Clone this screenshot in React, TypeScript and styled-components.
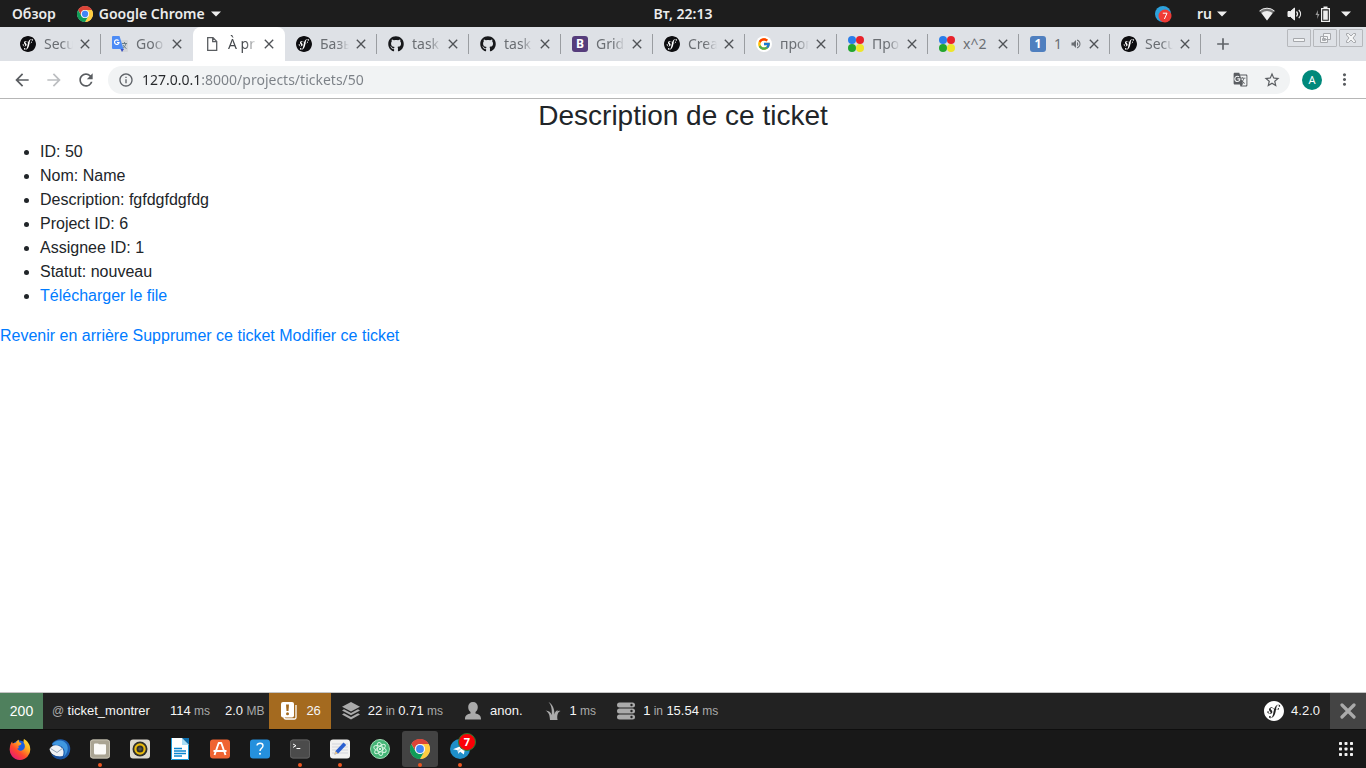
import React from "react";
import styled, { createGlobalStyle } from "styled-components";
import { SiSymfony } from "react-icons/si";
import { FaGithub } from "react-icons/fa";
import { FcGoogle } from "react-icons/fc";
import { MdArrowBack, MdArrowForward, MdRefresh, MdInfoOutline, MdStarBorder, MdMoreVert, MdClose, MdAdd, MdGTranslate, MdVolumeUp } from "react-icons/md";

const shellFont = `"Noto Sans", "Open Sans", sans-serif`;
const pageFont = `"Liberation Sans", Arial, sans-serif`;

const GlobalStyle = createGlobalStyle`
  *, *::before, *::after { box-sizing: border-box; }
  body { margin: 0; background: #fff; }
  button { border: 0; padding: 0; background: none; color: inherit; font: inherit; cursor: pointer; }
  svg { display: block; flex: none; }
`;

const Desktop = styled.div`
  min-height: 100vh;
  display: flex;
  flex-direction: column;
  font-family: ${shellFont};
`;

/* Desktop top bar */
const TopBar = styled.header`
  height: 27px;
  display: grid;
  grid-template-columns: 1fr auto 1fr;
  align-items: center;
  background: #1d1d1d;
  color: #ececec;
  font-size: 14px;
  font-weight: 600;
  line-height: 20px;
`;

const TopMenus = styled.div`
  display: flex;
  align-items: center;
  gap: 21px;
  padding-left: 12px;
`;

const MenuButton = styled.button`
  display: flex;
  align-items: center;
  gap: 6px;
`;

const Tray = styled.div`
  display: flex;
  align-items: center;
  justify-content: flex-end;
  padding-right: 15px;
`;

const TrayButton = styled.button<{ $gap: number }>`
  display: flex;
  align-items: center;
  gap: 5px;
  margin-left: ${(p) => p.$gap}px;
`;

/* Browser tabs */
const TabStrip = styled.div`
  height: 34px;
  display: flex;
  padding-left: 9px;
  background: #dee1e6;
  color: #5f6368;
`;

const Tabs = styled.div`
  flex: 0 1 1192px;
  min-width: 0;
  display: grid;
  grid-template-columns: repeat(9, 92fr) repeat(4, 91fr);
`;

const Tab = styled.div<{ $active?: boolean; $line: boolean }>`
  position: relative;
  min-width: 0;
  display: flex;
  align-items: center;
  padding: 0 8px 0 11px;
  color: ${(p) => (p.$active ? "#45494d" : "#6a6e73")};
  background: ${(p) => (p.$active ? "#fff" : "transparent")};
  border-radius: 8px 8px 0 0;
  &::after {
    content: "";
    display: ${(p) => (p.$line ? "block" : "none")};
    position: absolute;
    right: 0;
    top: 7px;
    width: 1px;
    height: 20px;
    background: #9a9da1;
  }
`;

const TabSelect = styled.button`
  flex: 1;
  min-width: 0;
  display: flex;
  align-items: center;
  gap: 8px;
  text-align: left;
`;

const TabTitle = styled.span<{ $fade: boolean }>`
  flex: 1;
  min-width: 0;
  overflow: hidden;
  white-space: nowrap;
  font-size: 14px;
  line-height: 20px;
  mask-image: ${(p) => (p.$fade ? "linear-gradient(to left, transparent, #000 12px)" : "none")};
`;

const TabClose = styled.button`
  width: 16px;
  height: 16px;
  margin-left: 4px;
  color: #505357;
`;

const NewTab = styled.button`
  width: 44px;
  display: grid;
  place-items: center;
`;

const WindowButtons = styled.div`
  display: flex;
  gap: 2px;
  margin-left: auto;
  padding: 2px 3px 0 0;
`;

const WindowButton = styled.button`
  width: 24px;
  height: 18px;
  display: grid;
  place-items: center;
  border: 1px solid #b6b8bc;
  border-radius: 1px;
`;

const SfDisc = styled.span<{ $size: number; $invert?: boolean }>`
  flex: none;
  width: ${(p) => p.$size}px;
  height: ${(p) => p.$size}px;
  display: grid;
  place-items: center;
  border-radius: 50%;
  background: ${(p) => (p.$invert ? "#222" : "#fff")};
  color: ${(p) => (p.$invert ? "#fff" : "#0d0d10")};
`;

const Badge = styled.span<{ $bg: string; $size: number; $round?: boolean }>`
  flex: none;
  width: ${(p) => p.$size}px;
  height: ${(p) => p.$size}px;
  display: grid;
  place-items: center;
  border-radius: ${(p) => (p.$round ? "50%" : "3px")};
  background: ${(p) => p.$bg};
  color: #fff;
  font-size: 12px;
  font-weight: 700;
  line-height: 16px;
`;

/* Address bar row */
const AddressRow = styled.div`
  height: 38px;
  display: flex;
  align-items: center;
  padding: 0 12px;
  background: #fff;
  border-bottom: 1px solid #b6b6b6;
  color: #5f6368;
`;

const NavButtons = styled.div`
  display: flex;
  gap: 12px;
  margin-right: 12px;
`;

const NavButton = styled.button<{ $dim?: boolean }>`
  width: 20px;
  height: 20px;
  display: grid;
  place-items: center;
  color: ${(p) => (p.$dim ? "#bcbec1" : "#5a5d61")};
`;

const Omnibox = styled.div`
  flex: 1;
  height: 28px;
  display: flex;
  align-items: center;
  padding: 0 8px 0 10px;
  border-radius: 14px;
  background: #f1f3f4;
`;

const UrlInput = styled.input`
  flex: 1;
  min-width: 0;
  margin-left: 8px;
  padding: 0;
  border: 0;
  outline: 0;
  font-family: ${shellFont};
  font-size: 14px;
  line-height: 20px;
  color: transparent;
  background: linear-gradient(to right, #26282b 59px, #7b8086 59px);
  background-clip: text;
`;

const OmniActions = styled.div`
  display: flex;
  align-items: center;
  gap: 12px;
`;

const Avatar = styled.button`
  width: 20px;
  height: 20px;
  margin: 0 12px;
  border-radius: 50%;
  background: #00897b;
  color: #fff;
  font-size: 11px;
  line-height: 20px;
`;

/* Ticket page */
const Page = styled.main`
  flex: 1;
  font-family: ${pageFont};
  font-size: 16px;
  line-height: 24px;
  color: #212529;
`;

const Heading = styled.h3`
  margin: 0 0 8px;
  font-size: 28px;
  font-weight: 500;
  line-height: 33px;
  text-align: center;
`;

const Details = styled.ul`
  margin: 0 0 16px;
  padding-left: 40px;
`;

const Link = styled.a`
  color: #007bff;
  text-decoration: none;
`;

/* Symfony debug toolbar */
const DebugBar = styled.footer`
  height: 37px;
  display: flex;
  border-top: 1px solid #c4c4c4;
  background: #222;
  color: #f5f5f5;
  font-family: ${pageFont};
  font-size: 13px;
  line-height: 36px;
`;

const DebugBlock = styled.a<{ $bg?: string; $tight?: boolean }>`
  display: flex;
  gap: 7px;
  align-items: center;
  padding: 0 ${(p) => (p.$tight ? 5 : 10)}px 0 10px;
  background: ${(p) => p.$bg ?? "transparent"};
  color: inherit;
  text-decoration: none;
  white-space: pre;
`;

const Status = styled.a`
  width: 43px;
  background: #4f805d;
  color: #fff;
  font-size: 14px;
  text-align: center;
  text-decoration: none;
`;

const Route = styled(DebugBlock)`
  padding-left: 9px;
`;

const Unit = styled.span`
  color: #aaa;
  font-size: 12px;
`;

const DebugEnd = styled.div`
  display: flex;
  margin-left: auto;
`;

const DebugClose = styled.button`
  width: 36px;
  display: grid;
  place-items: center;
  background: #444;
`;

/* Dock */
const DockBar = styled.nav`
  height: 39px;
  display: flex;
  align-items: center;
  padding: 0 10px 0 2px;
  background: #181818;
  border-top: 1px solid #0e0e0e;
`;

const DockList = styled.div`
  display: flex;
  gap: 4px;
`;

const DockItem = styled.button<{ $active?: boolean; $running?: boolean }>`
  position: relative;
  width: 36px;
  height: 36px;
  display: grid;
  place-items: center;
  border-radius: 3px;
  background: ${(p) => (p.$active ? "#434343" : "transparent")};
  &::after {
    content: "";
    display: ${(p) => (p.$running ? "block" : "none")};
    position: absolute;
    left: 16px;
    bottom: 0;
    width: 4px;
    height: 4px;
    border-radius: 2px;
    background: #e95420;
  }
`;

const DockCount = styled.span`
  position: absolute;
  right: 2px;
  top: 2px;
  width: 18px;
  height: 18px;
  border: 1px solid #2c7a2c;
  border-radius: 50%;
  background: #fb0007;
  color: #fff;
  font-size: 11px;
  font-weight: 700;
  line-height: 16px;
  text-align: center;
`;

const AppGrid = styled.button`
  margin-left: auto;
  width: 20px;
  height: 20px;
  display: grid;
  place-items: center;
`;

const ChromeLogo = ({ size }: { size: number }) => {
  const blade = "M2.47 6.5A11 11 0 0 1 21.53 6.5H12A5.5 5.5 0 0 0 7.24 14.75Z";
  return (
    <svg width={size} height={size} viewBox="1 1 22 22">
      <circle cx="12" cy="12" r="10.8" fill="#fff" />
      <path d={blade} fill="#db4437" />
      <path d={blade} fill="#ffcd40" transform="rotate(120 12 12)" />
      <path d={blade} fill="#0f9d58" transform="rotate(240 12 12)" />
      <circle cx="12" cy="12" r="5.5" fill="#f1f1f1" />
      <circle cx="12" cy="12" r="4.3" fill="#4285f4" />
    </svg>
  );
};

const Caret = () => (
  <svg width="10" height="6" viewBox="0 0 10 6"><path d="M0 0.5H10L5 5.5Z" fill="#eee" /></svg>
);

const SfIcon = ({ size, invert }: { size: number; invert?: boolean }) => (
  <SfDisc $size={size} $invert={invert}><SiSymfony size={size} /></SfDisc>
);

const TranslateIcon = () => (
  <svg width="16" height="16" viewBox="0 0 16 16">
    <path d="M6 4h9a1 1 0 0 1 1 1v10a1 1 0 0 1-1 1H9.5Z" fill="#d3d5d8" />
    <path d="M8.5 13L12 13l-2 3Z" fill="#3a4fc0" />
    <path d="M10 7.500h5M12.500 6v1.500M14 7.500c-.6 2.500-2 4-3.500 5M11 9c.7 1.500 2 2.800 3.500 3.500" stroke="#6b7f89" fill="none" />
    <path d="M1 0h6.500l4 13H1a1 1 0 0 1-1-1V1a1 1 0 0 1 1-1Z" fill="#4c8bf5" />
    <path d="M6.600 4.600A2.300 2.300 0 1 0 7.100 6.500H5" stroke="#fff" fill="none" strokeWidth="1.200" />
  </svg>
);

const FileIcon = () => (
  <svg width="16" height="16" viewBox="0 0 16 16" fill="none" stroke="#5a5d61" strokeWidth="1.300">
    <path d="M3.700 1.700H9l3.700 3.700v9H3.700ZM8.700 1.700v4h4" />
  </svg>
);

const BootstrapIcon = () => (
  <Badge $size={16} $bg="#563d7c">B</Badge>
);

const DotsIcon = () => (
  <svg width="16" height="16" viewBox="0 0 16 16">
    <circle cx="4" cy="4" r="4" fill="#2b7de9" />
    <circle cx="12" cy="4" r="4" fill="#e8212b" />
    <circle cx="4" cy="12" r="4" fill="#22a62e" />
    <circle cx="12" cy="12" r="4" fill="#eee52a" />
  </svg>
);

const GoogleIcon = () => (
  <Badge $size={16} $bg="#fff" $round><FcGoogle size={14} /></Badge>
);

const OneIcon = () => <Badge $size={16} $bg="#4f7fbf">1</Badge>;

const tabs: { title: string; icon: React.ReactNode; active?: boolean; audio?: boolean; whole?: boolean }[] = [
  { title: "Secu", icon: <SfIcon size={16} /> },
  { title: "Goo", icon: <TranslateIcon /> },
  { title: "À pr", icon: <FileIcon />, active: true },
  { title: "Базы", icon: <SfIcon size={16} /> },
  { title: "task", icon: <FaGithub size={16} color="#17181b" /> },
  { title: "task", icon: <FaGithub size={16} color="#17181b" /> },
  { title: "Grid", icon: <BootstrapIcon /> },
  { title: "Crea", icon: <SfIcon size={16} /> },
  { title: "прог", icon: <GoogleIcon /> },
  { title: "Про", icon: <DotsIcon /> },
  { title: "x^2", icon: <DotsIcon />, whole: true },
  { title: "1", icon: <OneIcon />, audio: true, whole: true },
  { title: "Secu", icon: <SfIcon size={16} /> },
];

const FirefoxIcon = () => (
  <svg width="22" height="22" viewBox="0 0 22 22">
    <defs>
      <linearGradient id="ff" x1="1" y1="0" x2="0.200" y2="1">
        <stop offset="0" stopColor="#fff14a" /><stop offset="0.350" stopColor="#ffb020" />
        <stop offset="0.650" stopColor="#ff4a2c" /><stop offset="1" stopColor="#e3157c" />
      </linearGradient>
    </defs>
    <circle cx="10.500" cy="10" r="7.500" fill="#1a5fe0" />
    <path d="M15 1c3 1.500 6 5 6.200 9.500A10.300 10.300 0 1 1 .8 10C1 7 1.800 5 3.200 3.500c0 1 .2 1.500.6 2 1-.8 2-1 3.200-.8C7.500 3 8.700 2 10 1.800 9.500 3 10 4.200 11.500 4.800c1 .4 1.200 1.300.2 2-1 .6-2 .7-2.400 1.700 1 1 .2 2-1 2.100.5 2.500 4.200 2.600 6.200.8 2-2 1.600-4.600.3-6.300C14.500 4 14.300 2.500 15 1Z" fill="url(#ff)" />
  </svg>
);

const ThunderbirdIcon = () => (
  <svg width="22" height="22" viewBox="0 0 22 22">
    <path d="M3 5.500C6 1 14-.5 18.500 4c4.500 4.500 3.500 13-3 16.500-3 1.300-6 1-8-1Z" fill="#1c5cae" />
    <path d="M3 6.500C6.500 1.500 14 1 17.500 6c2.500 4 1 9.500-2.500 12.500 1.500-4 1-8-3-10.500C9 6.500 5.500 7.500 3 6.500Z" fill="#3f97e0" />
    <path d="M.5 11C2.500 7.500 7 6 11 8.500c3.500 2.300 4.500 6 2.500 10C8 19.500 1.500 17 .5 11Z" fill="#eef1f5" />
    <path d="M1.500 10.500l6.500 4 6-4.500" stroke="#93a2b4" fill="none" />
    <path d="M2 15.500c2 4.500 6.500 6.500 11.500 5.500l1-3c-4 1-9 .5-12.500-2.500Z" fill="#174f9b" />
  </svg>
);

const FilesIcon = () => (
  <svg width="22" height="22" viewBox="0 0 22 22">
    <rect x="1" y="1.500" width="20" height="19" rx="3" fill="#aaa493" />
    <rect x="1.500" y="2" width="19" height="18" rx="2.500" fill="none" stroke="#c3beaf" />
    <path d="M5 6.500a1 1 0 0 1 1-1h3l1 .8h6a1 1 0 0 1 1 1V15a1.500 1.500 0 0 1-1.500 1.500h-9A1.500 1.500 0 0 1 5 15Z" fill="#fbfaf8" />
  </svg>
);

const RhythmIcon = () => (
  <svg width="22" height="22" viewBox="0 0 22 22">
    <rect x="1" y="1.500" width="20" height="19" rx="3" fill="#ddd9cf" />
    <circle cx="11" cy="11" r="7.500" fill="#2f2f2b" />
    <circle cx="11" cy="11" r="4.600" fill="none" stroke="#e8b90c" strokeWidth="2.200" />
    <circle cx="11" cy="11" r="1.800" fill="#55534c" />
  </svg>
);

const WriterIcon = () => (
  <svg width="22" height="22" viewBox="0 0 22 22">
    <path d="M2 0h11l7 7v15H2Z" fill="#fff" />
    <path d="M13 0h7v7Z" fill="#0d6fae" />
    <path d="M13 0v7h7Z" fill="#a9def7" />
    <path d="M5 10.500h8M5 13h12M5 15.500h12M5 18h8" stroke="#0a86cf" strokeWidth="1.300" />
    <path d="M2.500 0v21.500H19.500V7" fill="none" stroke="#1a9ad8" />
  </svg>
);

const SoftwareIcon = () => (
  <svg width="22" height="22" viewBox="0 0 22 22">
    <rect x="1" y="1.500" width="20" height="19" rx="3" fill="#ef6432" />
    <path d="M5.500 17L9.700 5h2.600L16.500 17M4.500 13h13" stroke="#fff" strokeWidth="1.900" fill="none" strokeLinejoin="round" />
  </svg>
);

const HelpIcon = () => (
  <svg width="22" height="22" viewBox="0 0 22 22">
    <rect x="1" y="1.500" width="20" height="19" rx="3" fill="#2590dd" />
    <path d="M8 7.500c.5-3 6-3 6 .3 0 2.400-3 2.500-3 5.200" stroke="#fff" strokeWidth="1.400" fill="none" />
    <circle cx="11" cy="15.800" r="1" fill="#fff" />
  </svg>
);

const TerminalIcon = () => (
  <svg width="22" height="22" viewBox="0 0 22 22">
    <rect x="1" y="1.500" width="20" height="19" rx="3" fill="#4b4b4b" />
    <rect x="1.500" y="2" width="19" height="18" rx="2.500" fill="none" stroke="#5f5f5f" />
    <path d="M4 6l3 1.700L4 9.400M7.500 10.500h3.800" stroke="#fff" fill="none" />
  </svg>
);

const EditorIcon = () => (
  <svg width="22" height="22" viewBox="0 0 22 22">
    <rect x="1" y="1.500" width="20" height="19" rx="3" fill="#f2f1f0" />
    <path d="M3 6h16M3 9h16M3 12h16M3 15h16" stroke="#d3d5db" />
    <path d="M5.500 16.500l1-3.500 8-8.500 2.700 2.500-8 8.500Z" fill="#2a5fd0" />
    <path d="M5.500 16.500l1-3.500 2.700 2.500Z" fill="#e8c68e" />
  </svg>
);

const AtomIcon = () => (
  <svg width="22" height="22" viewBox="0 0 22 22" fill="none" stroke="#d5f3df">
    <circle cx="11" cy="11" r="9.500" fill="#45b577" stroke="#9fdcb3" />
    <ellipse cx="11" cy="11" rx="2.500" ry="6.500" transform="rotate(-10 11 11)" />
    <ellipse cx="11" cy="11" rx="2.500" ry="6.500" transform="rotate(50 11 11)" />
    <ellipse cx="11" cy="11" rx="2.500" ry="6.500" transform="rotate(110 11 11)" />
    <circle cx="11" cy="11" r="1" fill="#fff" stroke="none" />
  </svg>
);

const TelegramIcon = () => (
  <svg width="22" height="22" viewBox="0 0 22 22">
    <circle cx="11" cy="11" r="10" fill="#1f8fc9" />
    <path d="M4 11.200L17 6l-2.200 10.500-3.600-2.700-2 1.900-.6-3.400Z" fill="#fff" />
    <path d="M8.600 12.300L15 8l-5 5.200-.8 2.500Z" fill="#b6d7ea" />
  </svg>
);

const dock: { label: string; icon: React.ReactNode; running?: boolean; active?: boolean; count?: number }[] = [
  { label: "Firefox", icon: <FirefoxIcon /> },
  { label: "Thunderbird", icon: <ThunderbirdIcon /> },
  { label: "Files", icon: <FilesIcon />, running: true },
  { label: "Rhythmbox", icon: <RhythmIcon /> },
  { label: "Writer", icon: <WriterIcon /> },
  { label: "Software", icon: <SoftwareIcon /> },
  { label: "Help", icon: <HelpIcon /> },
  { label: "Terminal", icon: <TerminalIcon />, running: true },
  { label: "Text Editor", icon: <EditorIcon />, running: true },
  { label: "Atom", icon: <AtomIcon /> },
  { label: "Google Chrome", icon: <ChromeLogo size={20} />, running: true, active: true },
  { label: "Telegram", icon: <TelegramIcon />, running: true, count: 7 },
];

const LogsIcon = () => (
  <svg width="20" height="20" viewBox="0 0 20 20">
    <path d="M5 3.500v12.500a2 2 0 0 0 2 2h8.500a1.500 1.500 0 0 0 1.500-1.500V4" stroke="#fff" strokeWidth="1.300" fill="none" />
    <rect x="2" y="1" width="13" height="15.500" rx="2" fill="#fff" />
    <path d="M7 3.500h3L9.500 10h-2Z" fill="#a46a1f" />
    <circle cx="8.500" cy="12.700" r="1.500" fill="#a46a1f" />
  </svg>
);

const LayersIcon = () => (
  <svg width="20" height="20" viewBox="0 0 20 20" fill="#aaa">
    <path d="M10 1l9 4.700-9 4.800-9-4.800Z" />
    <path d="M3 8.300L1 9.500l9 4.800 9-4.800-2-1.200-7 3.700Z" />
    <path d="M3 12.200l-2 1.200 9 5.100 9-5.100-2-1.200-7 3.900Z" />
  </svg>
);

const UserIcon = () => (
  <svg width="20" height="20" viewBox="0 0 20 20" fill="#aaa">
    <path d="M10 1c3 0 4.800 2 4.800 5 0 2.200-.8 4-2.300 5v1.500c2.800.6 5.500 1.500 5.500 5.500v.5H2V18c0-4 2.700-4.900 5.500-5.500V11C6 10 5.200 8.200 5.200 6c0-3 1.800-5 4.800-5Z" />
  </svg>
);

const TwigIcon = () => (
  <svg width="20" height="20" viewBox="0 0 20 20" fill="#aaa">
    <path d="M7 19c-.2-4.500-1-7.500-4.500-9.500 3.500.3 5.300 1.800 6.300 4.500C9 8.500 8.500 4 5.500 1c4.500 2.500 6 7.500 6 12.500.5-2.600 1.500-4 3.800-4.700-.8.700-1.300 1.300-1.500 2 .8-.9 2.200-1.400 3.700-.8-3 1.200-3.700 5-2.900 9Z" />
  </svg>
);

const DatabaseIcon = () => (
  <svg width="20" height="20" viewBox="0 0 20 20">
    <g fill="#aaa"><rect x="1" y="1.500" width="18" height="5" rx="2.500" /><rect x="1" y="7.500" width="18" height="5" rx="2.500" /><rect x="1" y="13.500" width="18" height="5" rx="2.500" /></g>
    <g fill="#222"><circle cx="15.500" cy="4" r="1.200" /><circle cx="15.500" cy="10" r="1.200" /><circle cx="15.500" cy="16" r="1.200" /></g>
  </svg>
);

const WifiIcon = () => (
  <svg width="16" height="16" viewBox="0 0 16 16">
    <path d="M.5 5A11.500 11.500 0 0 1 15.500 5L8 14.500Z" fill="#777" />
    <path d="M.5 5A11.500 11.500 0 0 1 15.500 5" stroke="#eee" fill="none" />
    <path d="M2.500 7A8.500 8.500 0 0 1 13.500 7L8 14.500Z" fill="#eee" />
  </svg>
);

const VolumeIcon = () => (
  <svg width="16" height="16" viewBox="0 0 16 16" fill="none" stroke="#eee">
    <path d="M1 5.500h2.500L7.500 2v12L3.500 10.500H1Z" fill="#eee" />
    <path d="M9.500 5.500c1.300 1.500 1.300 3.500 0 5M11.800 3.800c2.300 2.500 2.300 6 0 8.400" strokeWidth="1.200" />
  </svg>
);

const BatteryIcon = () => (
  <svg width="16" height="16" viewBox="0 0 16 16">
    <path d="M3 4L.5 9H2.500L2 13 4.500 8H2.800Z" fill="#999" />
    <path d="M6.600 2.600h7.800v12.800H6.600Z" fill="none" stroke="#eee" strokeWidth="1.200" />
    <path d="M8.500 0.500h4V2h-4ZM8.200 4.500h4.600v9.300H8.200Z" fill="#eee" />
  </svg>
);

const TrayTelegram = () => (
  <svg width="18" height="18" viewBox="0 0 18 18">
    <circle cx="9" cy="9" r="8" fill="#2ca1dc" />
    <circle cx="11" cy="11" r="6.500" fill="#f03b36" />
    <path d="M8.800 8.200h4.200L10.400 14" stroke="#fff" fill="none" />
  </svg>
);

const windowIcons = [
  { label: "Minimize", d: "M6.500 8.500h11v3h-11Z" },
  { label: "Restore", d: "M10.500 3.500h7v6h-7ZM7.500 6.500h7v6h-7ZM9.500 8.500h3v2h-3Z" },
  { label: "Close window", d: "M7.500 3.500h2L12 6l2.500-2.500h2V5L14 8l2.500 3v1.500h-2L12 10l-2.500 2.500h-2V11L10 8 7.500 5Z" },
];

export default function App() {
  return (
    <Desktop>
      <GlobalStyle />
      <TopBar>
        <TopMenus>
          <MenuButton>Обзор</MenuButton>
          <MenuButton><ChromeLogo size={16} />Google Chrome<Caret /></MenuButton>
        </TopMenus>
        <time>Вт, 22:13</time>
        <Tray>
          <TrayButton $gap={0} aria-label="Telegram"><TrayTelegram /></TrayButton>
          <TrayButton $gap={25}>ru<Caret /></TrayButton>
          <TrayButton $gap={32} aria-label="Wi-Fi"><WifiIcon /></TrayButton>
          <TrayButton $gap={12} aria-label="Volume"><VolumeIcon /></TrayButton>
          <TrayButton $gap={12} aria-label="Battery"><BatteryIcon /></TrayButton>
          <TrayButton $gap={10} aria-label="System menu"><Caret /></TrayButton>
        </Tray>
      </TopBar>

      <TabStrip>
        <Tabs role="tablist">
          {tabs.map((tab, i) => (
            <Tab key={i} $active={tab.active} $line={!tab.active && !tabs[i + 1]?.active}>
              <TabSelect role="tab" aria-selected={!!tab.active}>
                {tab.icon}
                <TabTitle $fade={!tab.whole}>{tab.title}</TabTitle>
                {tab.audio && <MdVolumeUp size={12} />}
              </TabSelect>
              <TabClose aria-label="Close tab"><MdClose size={16} /></TabClose>
            </Tab>
          ))}
        </Tabs>
        <NewTab aria-label="New tab"><MdAdd size={20} /></NewTab>
        <WindowButtons>
          {windowIcons.map((w) => (
            <WindowButton key={w.label} aria-label={w.label}>
              <svg width="22" height="16" viewBox="1 0 22 16" fill="#f4f5f6" stroke="#a6a8ac"><path d={w.d} /></svg>
            </WindowButton>
          ))}
        </WindowButtons>
      </TabStrip>

      <AddressRow>
        <NavButtons>
          <NavButton aria-label="Back"><MdArrowBack size={20} /></NavButton>
          <NavButton aria-label="Forward" $dim><MdArrowForward size={20} /></NavButton>
          <NavButton aria-label="Reload"><MdRefresh size={20} /></NavButton>
        </NavButtons>
        <Omnibox>
          <MdInfoOutline size={16} />
          <UrlInput aria-label="Address" defaultValue="127.0.0.1:8000/projects/tickets/50" />
          <OmniActions>
            <NavButton aria-label="Translate"><MdGTranslate size={15} /></NavButton>
            <NavButton aria-label="Bookmark"><MdStarBorder size={18} /></NavButton>
          </OmniActions>
        </Omnibox>
        <Avatar aria-label="Profile">A</Avatar>
        <NavButton aria-label="Menu"><MdMoreVert size={19} /></NavButton>
      </AddressRow>

      <Page>
        <Heading>Description de ce ticket</Heading>
        <Details>
          <li>ID: 50</li>
          <li>Nom: Name</li>
          <li>Description: fgfdgfdgfdg</li>
          <li>Project ID: 6</li>
          <li>Assignee ID: 1</li>
          <li>Statut: nouveau</li>
          <li><Link href="#file">Télécharger le file</Link></li>
        </Details>
        <Link href="#back">Revenir en arrière</Link>{" "}
        <Link href="#delete">Supprumer ce ticket</Link>{" "}
        <Link href="#edit">Modifier ce ticket</Link>
      </Page>

      <DebugBar>
        <Status href="#request">200</Status>
        <Route href="#route"><span><Unit>@ </Unit>ticket_montrer</span></Route>
        <DebugBlock href="#time" $tight><span>114<Unit> ms</Unit></span></DebugBlock>
        <DebugBlock href="#memory" $tight><span>2.0<Unit> MB</Unit></span></DebugBlock>
        <DebugBlock href="#logs" $bg="#a46a1f"><LogsIcon /><span>26</span></DebugBlock>
        <DebugBlock href="#cache"><LayersIcon /><span>22<Unit> in </Unit>0.71<Unit> ms</Unit></span></DebugBlock>
        <DebugBlock href="#user"><UserIcon /><span>anon.</span></DebugBlock>
        <DebugBlock href="#twig"><TwigIcon /><span>1<Unit> ms</Unit></span></DebugBlock>
        <DebugBlock href="#db"><DatabaseIcon /><span>1<Unit> in </Unit>15.54<Unit> ms</Unit></span></DebugBlock>
        <DebugEnd>
          <DebugBlock href="#config"><SfIcon size={20} invert /><span>4.2.0</span></DebugBlock>
          <DebugClose aria-label="Close toolbar">
            <svg width="16" height="16" viewBox="0 0 16 16"><path d="M2 2l12 12M14 2L2 14" stroke="#aaa" strokeWidth="3.200" strokeLinecap="round" /></svg>
          </DebugClose>
        </DebugEnd>
      </DebugBar>

      <DockBar>
        <DockList>
          {dock.map((d) => (
            <DockItem key={d.label} aria-label={d.label} $active={d.active} $running={d.running}>
              {d.icon}
              {d.count && <DockCount>{d.count}</DockCount>}
            </DockItem>
          ))}
        </DockList>
        <AppGrid aria-label="Show applications">
          <svg width="14" height="14" viewBox="0 0 14 14" fill="#f2f2f2">
            {[0, 5.500, 11].map((y) => [0, 5.500, 11].map((x) => <rect key={`${x}-${y}`} x={x} y={y} width="3" height="3" rx="0.700" />))}
          </svg>
        </AppGrid>
      </DockBar>
    </Desktop>
  );
}
